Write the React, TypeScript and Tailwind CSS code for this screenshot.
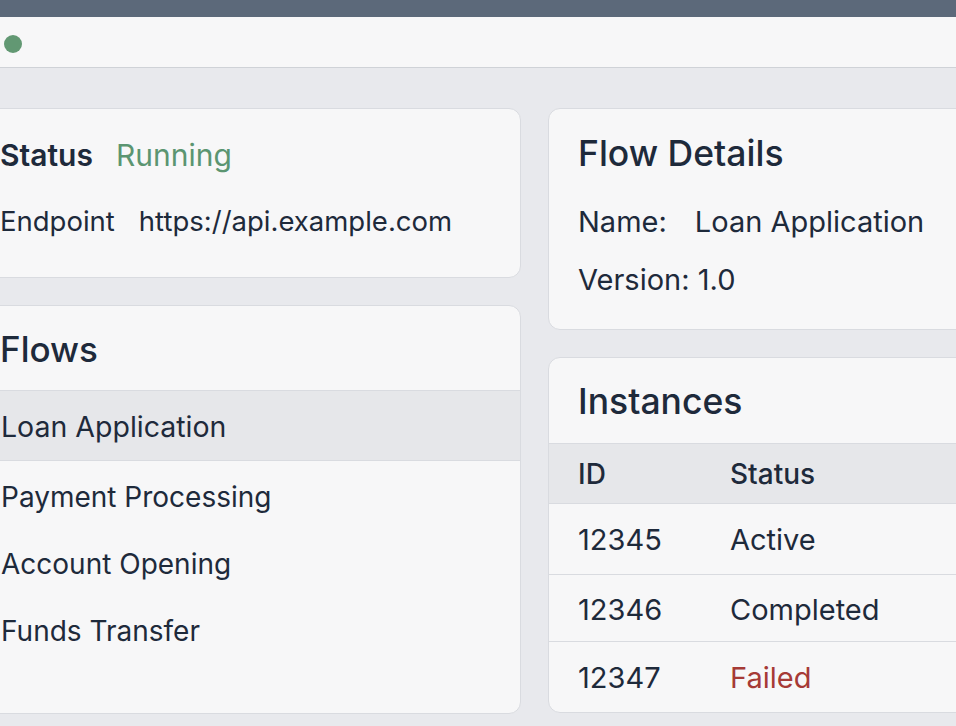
import React from "react";

const font = { fontFamily: "Inter, 'Noto Sans', sans-serif" };

export default function App() {
  return (
    <div className="w-[956px] h-[726px] overflow-hidden bg-[#e8e9ed] text-[#1e2a3b]" style={font}>
      <div className="h-[17px] bg-[#5c697a]" />
      <div className="h-[51px] bg-[#f7f7f8] border-b border-[#cfd2d7] flex items-center">
        <div className="ml-[4px] mt-[4px] w-[18px] h-[18px] rounded-full bg-[#629873]" />
      </div>
      <div className="flex gap-[27px] ml-[-30px] pt-[40px]">
        <div className="w-[551px] shrink-0 flex flex-col gap-[27px]">
          <div className="h-[170px] rounded-[12px] bg-[#f7f7f8] border border-[#d9dbe0] px-[29px] pt-[26px] flex flex-col gap-[27px]">
            <div className="h-[40px] flex items-center text-[30px]">
              <span className="font-semibold">Status</span>
              <span className="ml-[23px] text-[#5b9571]">Running</span>
            </div>
            <div className="h-[40px] flex items-center text-[27.5px]">
              <span>Endpoint</span>
              <span className="ml-[24px]">https://api.example.com</span>
            </div>
          </div>
          <div className="h-[409px] rounded-[12px] bg-[#f7f7f8] border border-[#d9dbe0] overflow-hidden">
            <div className="h-[85px] px-[29px] pt-[3px] flex items-center text-[35px] font-medium border-b border-[#d9dbe0]">
              Flows
            </div>
            <div className="h-[70px] px-[29px] pt-[4px] flex items-center text-[28.5px] bg-[#e6e7ea] border-b border-[#d9dbe0]">
              <span className="ml-[1px]">Loan Application</span>
            </div>
            {["Payment Processing", "Account Opening", "Funds Transfer"].map((t) => (
              <div key={t} className="h-[67px] px-[29px] pt-[5px] flex items-center text-[28px]">
                <span className="ml-[1px]">{t}</span>
              </div>
            ))}
          </div>
        </div>
        <div className="w-[551px] shrink-0 flex flex-col gap-[27px]">
          <div className="h-[222px] rounded-[12px] bg-[#f7f7f8] border border-[#d9dbe0] px-[29px] pt-[23px] flex flex-col">
            <div className="h-[44px] flex items-center text-[35.5px] font-medium">Flow Details</div>
            <div className="h-[40px] mt-[26px] flex items-center text-[29px]">
              <span>Name:</span>
              <span className="ml-[28px]">Loan Application</span>
            </div>
            <div className="h-[40px] mt-[18px] flex items-center text-[29px]">
              <span>Version: 1.0</span>
            </div>
          </div>
          <div className="h-[356px] rounded-[12px] bg-[#f7f7f8] border border-[#d9dbe0] overflow-hidden">
            <div className="h-[86px] px-[29px] pt-[3px] flex items-center text-[35.5px] font-medium border-b border-[#d9dbe0]">
              Instances
            </div>
            <div className="h-[60px] px-[29px] flex items-center text-[28px] font-medium bg-[#e6e7ea] border-b border-[#d9dbe0]">
              <span className="w-[152px]">ID</span>
              <span>Status</span>
            </div>
            <div className="h-[71px] px-[29px] pt-[2px] flex items-center text-[29px] border-b border-[#d9dbe0]">
              <span className="w-[152px]">12345</span>
              <span>Active</span>
            </div>
            <div className="h-[67px] px-[29px] pt-[3px] flex items-center text-[29px] border-b border-[#d9dbe0]">
              <span className="w-[152px]">12346</span>
              <span>Completed</span>
            </div>
            <div className="h-[70px] px-[29px] pt-[1px] flex items-center text-[29px]">
              <span className="w-[152px]">12347</span>
              <span className="text-[#a63a36]">Failed</span>
            </div>
          </div>
        </div>
      </div>
    </div>
  );
}
